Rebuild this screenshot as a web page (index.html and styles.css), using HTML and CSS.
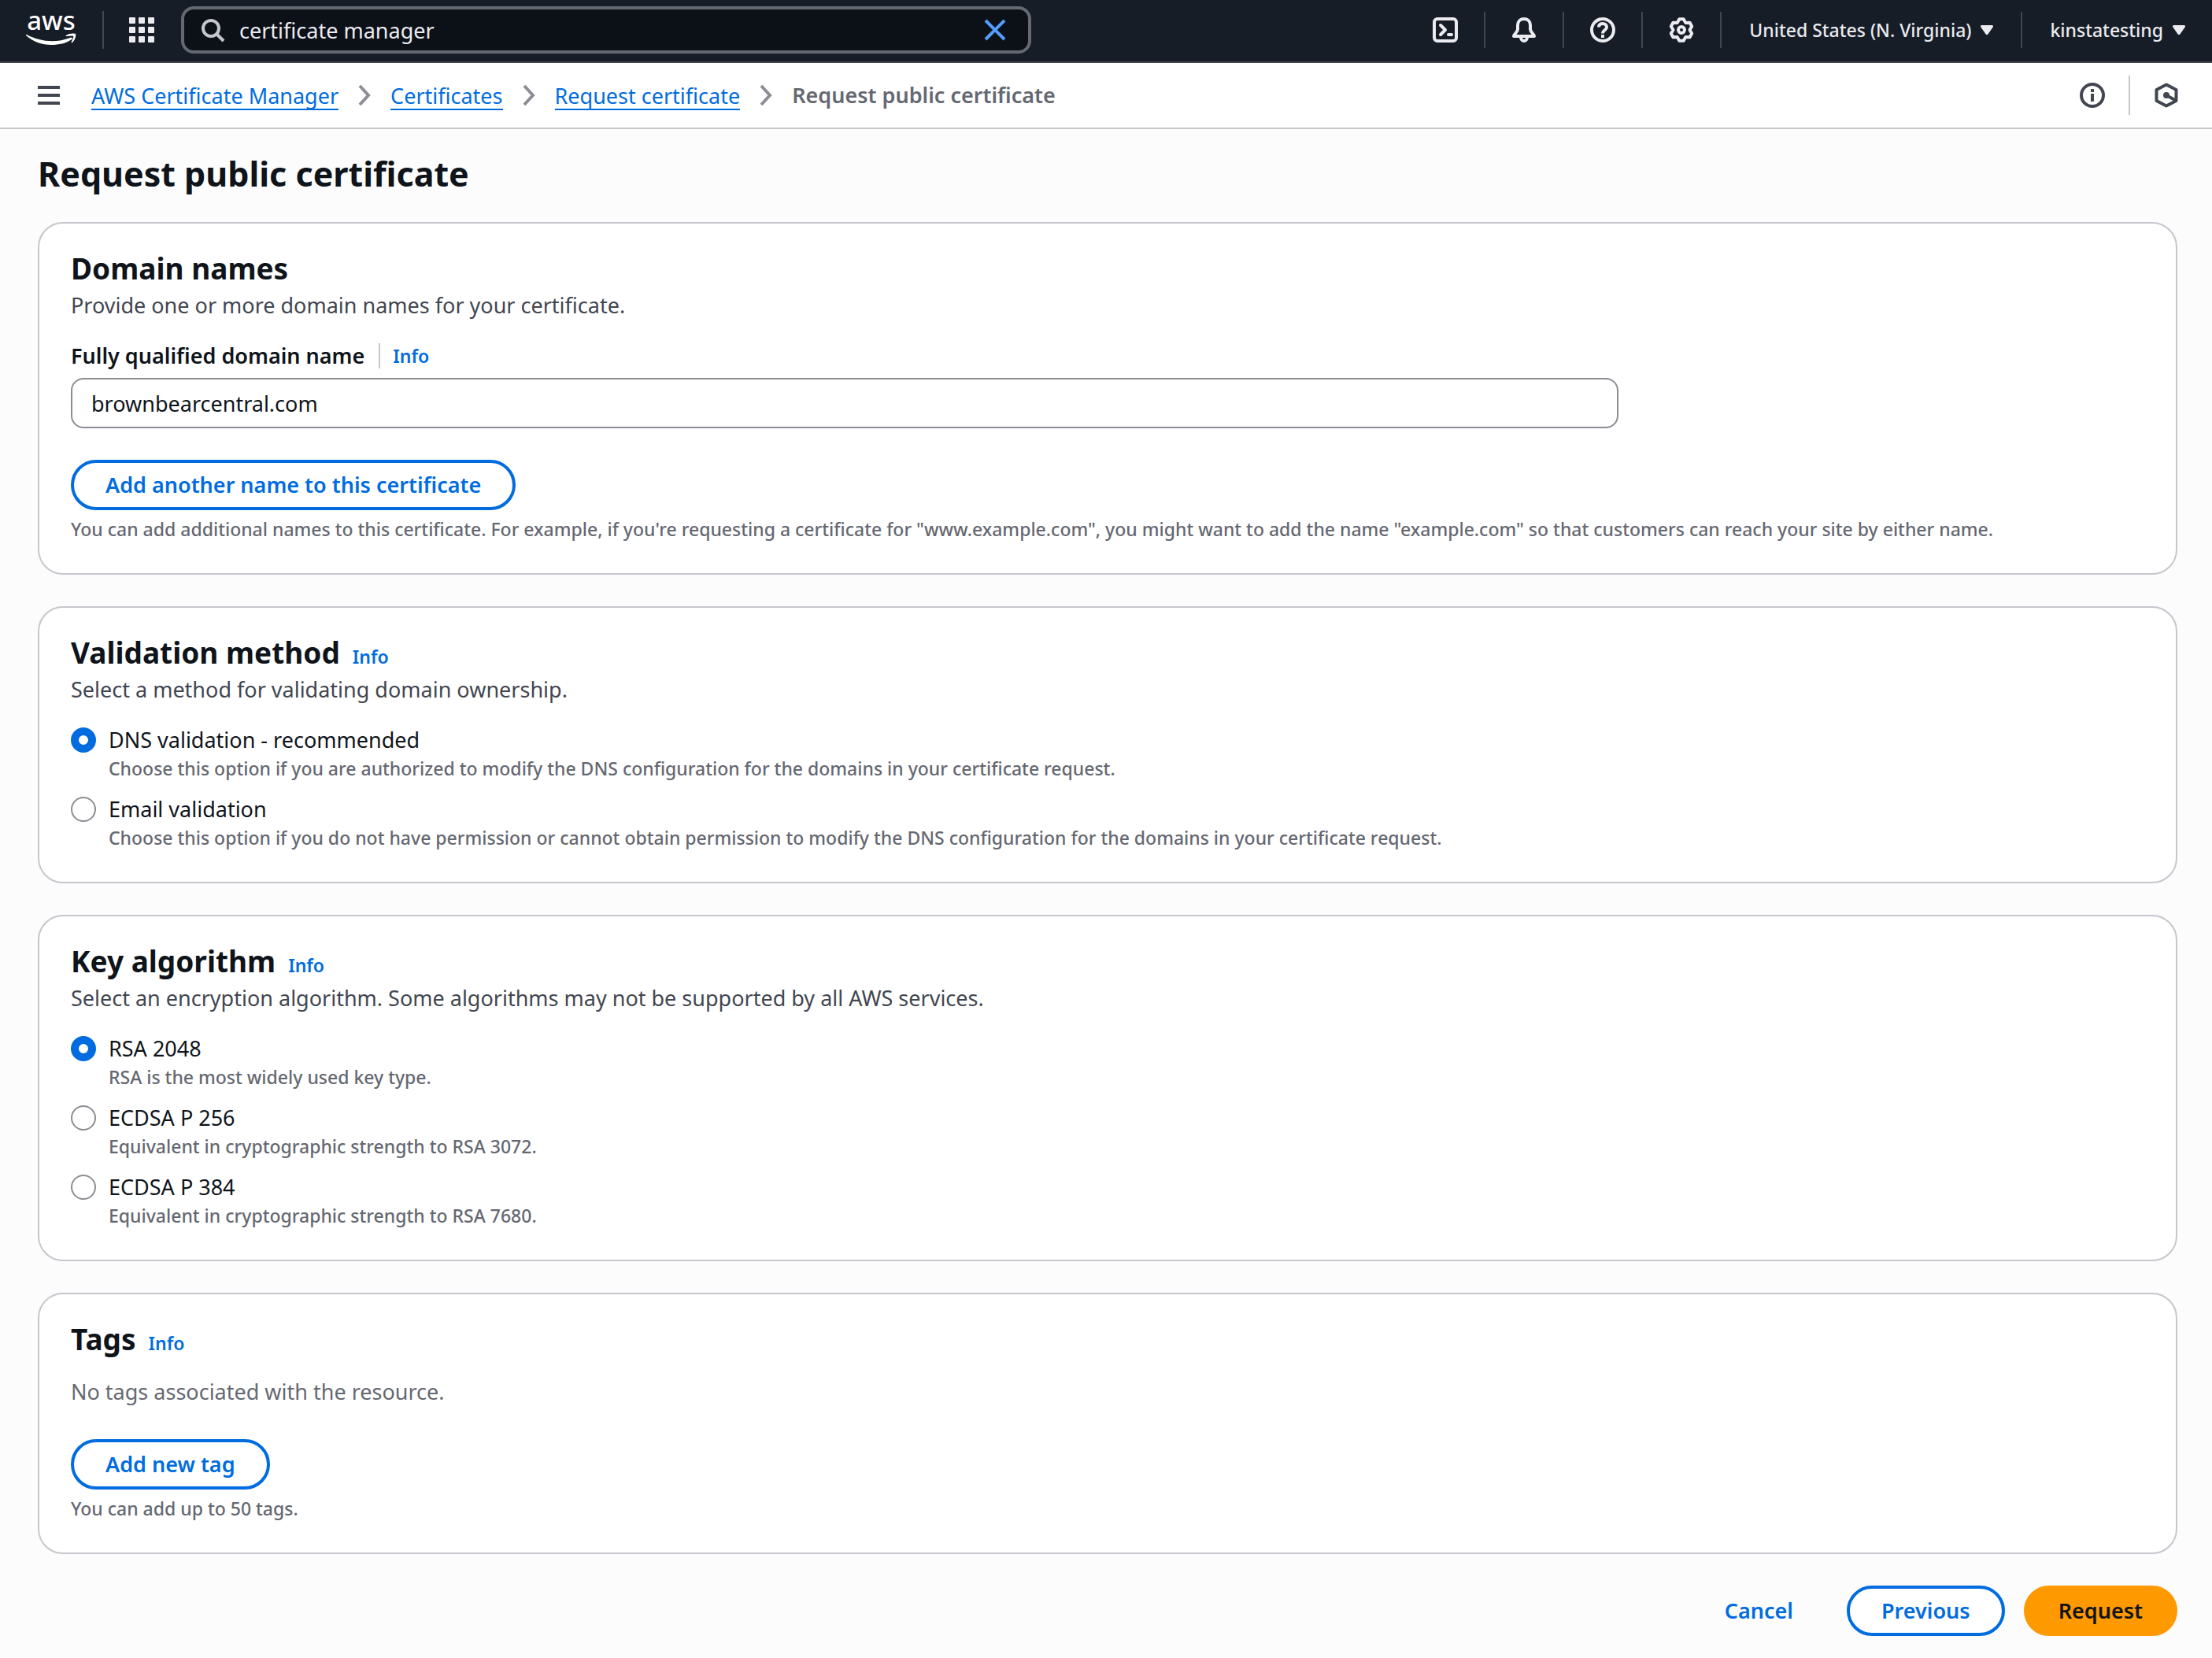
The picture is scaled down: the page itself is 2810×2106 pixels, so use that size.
FILE: index.html
```html
<!DOCTYPE html>
<html lang="en">
<head>
<meta charset="utf-8">
<title>Request public certificate</title>
<link rel="stylesheet" href="styles.css">
</head>
<body>
<header class="topnav">
  <a class="logo" href="#" aria-label="AWS home">
    <svg viewBox="0 0 64 76" width="64" height="76" fill="currentColor">
      <text class="logo-text" x="32" y="38" text-anchor="middle">aws</text>
      <path d="M1 44 C18 53 38 55 56 48 C59 47 60 49 58 50 C51 55 42 57 32 57 C20 57 9 53 0 45 Q0 43 1 44 Z"/>
      <path d="M51 45 C54 42 62 42 63 43 C64 46 62 51 59 54 C58 55 57 54 58 53 C59 50 61 47 60 46 C58 45 55 46 52 46 C50 46 50 46 51 45 Z"/>
    </svg>
  </a>
  <button class="icon-btn services" type="button" aria-label="Services">
    <svg width="32" height="32" viewBox="0 0 32 32" fill="currentColor"><rect width="8" height="8" rx="1"/><rect x="12" width="8" height="8" rx="1"/><rect x="24" width="8" height="8" rx="1"/><rect y="12" width="8" height="8" rx="1"/><rect x="12" y="12" width="8" height="8" rx="1"/><rect x="24" y="12" width="8" height="8" rx="1"/><rect y="24" width="8" height="8" rx="1"/><rect x="12" y="24" width="8" height="8" rx="1"/><rect x="24" y="24" width="8" height="8" rx="1"/></svg>
  </button>
  <form class="search" role="search">
    <svg class="search-icon" width="32" height="32" viewBox="0 0 32 32" fill="none" stroke="currentColor" stroke-width="4"><circle cx="14" cy="14" r="10"/><path d="M21 21l9 9"/></svg>
    <input class="search-input" type="text" aria-label="Search" value="certificate manager">
    <button class="icon-btn clear" type="button" aria-label="Clear">
      <svg width="28" height="28" viewBox="0 0 28 28" fill="none" stroke="currentColor" stroke-width="4"><path d="M2 2l24 24M26 2L2 26"/></svg>
    </button>
  </form>
  <nav class="utilities">
    <button class="util" type="button" aria-label="CloudShell">
      <svg width="32" height="32" viewBox="0 0 32 32" fill="none" stroke="currentColor" stroke-width="4" stroke-linejoin="round" stroke-linecap="round"><rect x="2" y="2" width="28" height="28" rx="4"/><path d="M10 10l6 6-6 6M20 22h4"/></svg>
    </button>
    <button class="util" type="button" aria-label="Notifications">
      <svg width="32" height="32" viewBox="0 0 32 32" fill="none" stroke="currentColor" stroke-width="4" stroke-linejoin="round"><path d="M16 2c-5 0-8 3.500-8 8v5c0 4-4.500 6-5 9h26c-.5-3-5-5-5-9v-5c0-4.500-3-8-8-8z"/><path d="M12 25c0 3 2 5 4 5s4-2 4-5"/></svg>
    </button>
    <button class="util" type="button" aria-label="Help">
      <svg width="32" height="32" viewBox="0 0 32 32" fill="none" stroke="currentColor" stroke-width="4"><circle cx="16" cy="16" r="14"/><path d="M11 12.500c0-3 2-4.500 5-4.500s5 2 5 4.500c0 4-5 3.500-5 8M16 22v4"/></svg>
    </button>
    <button class="util" type="button" aria-label="Settings">
      <svg width="32" height="32" viewBox="0 0 32 32" fill="none" stroke="currentColor" stroke-width="4" stroke-linejoin="round"><path d="M13.300 2.300h5.400L21.200 6.900l5.400-.1 2.600 4.600L26.500 16l2.700 4.600-2.600 4.600-5.400-.1-2.500 4.600h-5.400l-2.500-4.600-5.400.1-2.600-4.600L5.500 16l-2.700-4.600 2.600-4.600 5.400.1z"/><circle cx="16" cy="16" r="4"/></svg>
    </button>
    <button class="util menu" type="button">United States (N. Virginia)<svg width="16" height="12" viewBox="0 0 16 12" fill="currentColor"><path d="M1 0h14q1 0 1 2L9 12H7L0 2q0-2 1-2z"/></svg></button>
    <button class="util menu" type="button">kinstatesting<svg width="16" height="12" viewBox="0 0 16 12" fill="currentColor"><path d="M1 0h14q1 0 1 2L9 12H7L0 2q0-2 1-2z"/></svg></button>
  </nav>
</header>

<div class="crumbbar">
  <button class="icon-btn" type="button" aria-label="Open navigation">
    <svg width="28" height="24" viewBox="0 0 28 24" fill="currentColor"><path d="M0 0h28v4H0zM0 10h28v4H0zM0 20h28v4H0z"/></svg>
  </button>
  <nav class="crumbs" aria-label="Breadcrumbs">
    <a href="#">AWS Certificate Manager</a>
    <svg width="16" height="28" viewBox="0 0 16 28" fill="none" stroke="currentColor" stroke-width="4"><path d="M2 2l11 12L2 26"/></svg>
    <a href="#">Certificates</a>
    <svg width="16" height="28" viewBox="0 0 16 28" fill="none" stroke="currentColor" stroke-width="4"><path d="M2 2l11 12L2 26"/></svg>
    <a href="#">Request certificate</a>
    <svg width="16" height="28" viewBox="0 0 16 28" fill="none" stroke="currentColor" stroke-width="4"><path d="M2 2l11 12L2 26"/></svg>
    <span class="current">Request public certificate</span>
  </nav>
  <div class="tools">
    <button class="tool" type="button" aria-label="Information">
      <svg width="32" height="32" viewBox="0 0 32 32" fill="none" stroke="currentColor" stroke-width="4"><circle cx="16" cy="16" r="14"/><path d="M16 8v4M16 14v10"/></svg>
    </button>
    <button class="tool" type="button" aria-label="Assistant">
      <svg width="32" height="32" viewBox="0 0 32 32" fill="none" stroke="currentColor" stroke-width="4" stroke-linejoin="round"><path d="M16 2.500l12.500 6.500v14L16 29.500 3.500 23V9z"/><path d="M16 16l11 6"/><circle cx="16" cy="16" r="4" fill="currentColor" stroke="none"/></svg>
    </button>
  </div>
</div>

<main class="page">
  <h1>Request public certificate</h1>

  <section class="card">
    <h2>Domain names</h2>
    <p class="lead">Provide one or more domain names for your certificate.</p>
    <div class="field">
      <div class="field-label"><label for="fqdn">Fully qualified domain name</label><a class="info divided" href="#">Info</a></div>
      <input class="text-input" id="fqdn" type="text" value="brownbearcentral.com">
    </div>
    <button class="btn" type="button">Add another name to this certificate</button>
    <p class="hint">You can add additional names to this certificate. For example, if you're requesting a certificate for "www.example.com", you might want to add the name "example.com" so that customers can reach your site by either name.</p>
  </section>

  <section class="card">
    <div class="heading"><h2>Validation method</h2><a class="info" href="#">Info</a></div>
    <p class="lead">Select a method for validating domain ownership.</p>
    <div class="options">
      <div class="option"><input type="radio" name="validation" id="dns" checked><label for="dns">DNS validation - recommended</label><p>Choose this option if you are authorized to modify the DNS configuration for the domains in your certificate request.</p></div>
      <div class="option"><input type="radio" name="validation" id="email"><label for="email">Email validation</label><p>Choose this option if you do not have permission or cannot obtain permission to modify the DNS configuration for the domains in your certificate request.</p></div>
    </div>
  </section>

  <section class="card">
    <div class="heading"><h2>Key algorithm</h2><a class="info" href="#">Info</a></div>
    <p class="lead">Select an encryption algorithm. Some algorithms may not be supported by all AWS services.</p>
    <div class="options">
      <div class="option"><input type="radio" name="algorithm" id="rsa2048" checked><label for="rsa2048">RSA 2048</label><p>RSA is the most widely used key type.</p></div>
      <div class="option"><input type="radio" name="algorithm" id="p256"><label for="p256">ECDSA P 256</label><p>Equivalent in cryptographic strength to RSA 3072.</p></div>
      <div class="option"><input type="radio" name="algorithm" id="p384"><label for="p384">ECDSA P 384</label><p>Equivalent in cryptographic strength to RSA 7680.</p></div>
    </div>
  </section>

  <section class="card">
    <div class="heading"><h2>Tags</h2><a class="info" href="#">Info</a></div>
    <p class="empty">No tags associated with the resource.</p>
    <button class="btn" type="button">Add new tag</button>
    <p class="hint">You can add up to 50 tags.</p>
  </section>

  <div class="actions">
    <button class="btn link" type="button">Cancel</button>
    <button class="btn" type="button">Previous</button>
    <button class="btn primary" type="button">Request</button>
  </div>
</main>
</body>
</html>
```
FILE: styles.css
```css
* { box-sizing: border-box; }

body {
  margin: 0;
  background: #fcfcfd;
  color: #0f141a;
  font: 400 27px/40px "Noto Sans", "Open Sans", sans-serif;
}

h1, h2, p { margin: 0; }
button, input { font: inherit; color: inherit; }
button { margin: 0; padding: 0; border: 0; background: none; }
svg { display: block; flex: none; }

/* Top navigation */
.topnav {
  display: flex;
  align-items: center;
  height: 80px;
  padding: 0 34px 2px 0;
  border-bottom: 2px solid #424650;
  background: #161d26;
  color: #ebebf0;
}
.logo {
  display: flex;
  align-items: center;
  height: 48px;
  padding: 0 33px;
  border-right: 2px solid #424650;
  color: #fff;
}
.logo-text { font-size: 33px; font-weight: 500; }
.icon-btn { display: flex; }
.services { margin: 0 34px 0 32px; }
.search {
  display: flex;
  align-items: center;
  width: 1080px;
  height: 60px;
  padding: 0 28px 0 20px;
  border: 4px solid #656871;
  border-radius: 16px;
  background: #0c1118;
}
.search-icon { color: #c6c6cd; }
.search-input {
  flex: 1;
  min-width: 0;
  margin-left: 18px;
  padding: 2px 0 0;
  border: 0;
  outline: 0;
  background: none;
}
.clear { color: #539fff; }
.utilities { display: flex; align-items: center; margin-left: auto; }
.util {
  display: flex;
  align-items: center;
  gap: 12px;
  height: 46px;
  padding: 0 33px;
  font-size: 23px;
  font-weight: 500;
}
.util + .util { border-left: 2px solid #424650; }
.util.menu { padding: 0 35px; }
.util:last-child { padding-right: 0; }

/* Breadcrumb bar */
.crumbbar {
  display: flex;
  align-items: center;
  height: 84px;
  padding: 0 42px 0 48px;
  border-bottom: 2px solid #c6c6cd;
  background: #fff;
  color: #424650;
}
.crumbs {
  display: flex;
  align-items: center;
  gap: 25px;
  margin-left: 40px;
  color: #8c8c94;
}
.crumbs a {
  height: 38px;
  border-bottom: 2px solid;
  color: #006ce0;
  text-decoration: none;
}
.current { color: #656871; font-weight: 600; }
.tools { display: flex; align-items: center; margin-left: auto; }
.tool { display: flex; align-items: center; height: 50px; padding-right: 30px; }
.tool + .tool { padding: 0 0 0 30px; border-left: 2px solid #c6c6cd; }

/* Page */
.page { padding: 27px 44px 28px 48px; }
h1 { font-size: 43px; line-height: 60px; font-weight: 700; }
h2 { font-size: 37px; line-height: 48px; font-weight: 700; }
.card {
  margin-bottom: 40px;
  padding: 33px 40px 40px;
  border: 2px solid #c6c6cd;
  border-radius: 32px;
  background: #fff;
}
h1 + .card { margin-top: 31px; }
.heading { display: flex; align-items: baseline; gap: 16px; }
.lead { margin-top: 3px; color: #424650; }
.info {
  color: #006ce0;
  font-size: 23px;
  line-height: 32px;
  font-weight: 600;
  text-decoration: none;
}
.field { margin: 24px 0 40px; }
.field-label { display: flex; align-items: center; margin-bottom: 8px; font-weight: 600; }
.divided { margin-left: 18px; padding-left: 16px; border-left: 2px solid #c6c6cd; }
.text-input {
  display: block;
  width: calc(75% - 10px);
  height: 64px;
  padding: 0 24px;
  border: 2px solid #8c8c94;
  border-radius: 16px;
  background: #fff;
}
.btn {
  height: 64px;
  padding: 0 40px;
  border: 4px solid #006ce0;
  border-radius: 32px;
  background: #fff;
  color: #006ce0;
  font-weight: 600;
}
.hint { margin-top: 8px; color: #656871; font-size: 23px; line-height: 32px; font-weight: 500; }
.empty { margin: 23px 0 40px; color: #656871; }

/* Radio groups */
.options { display: grid; gap: 16px; margin-top: 24px; }
.option { display: grid; grid-template-columns: 32px 1fr; column-gap: 16px; align-items: center; }
.option p { grid-column: 2; color: #656871; font-size: 23px; line-height: 32px; font-weight: 500; }
.option input {
  appearance: none;
  width: 32px;
  height: 32px;
  margin: 0;
  border: 2px solid #8c8c94;
  border-radius: 50%;
  background: #fff;
}
.option input:checked { border: 10px solid #006ce0; }

/* Footer actions */
.actions { display: flex; justify-content: flex-end; gap: 24px; }
.btn.link { border-color: transparent; background: none; }
.btn.primary { border-color: #ff9900; background: #ff9900; color: #0f141a; }
```
